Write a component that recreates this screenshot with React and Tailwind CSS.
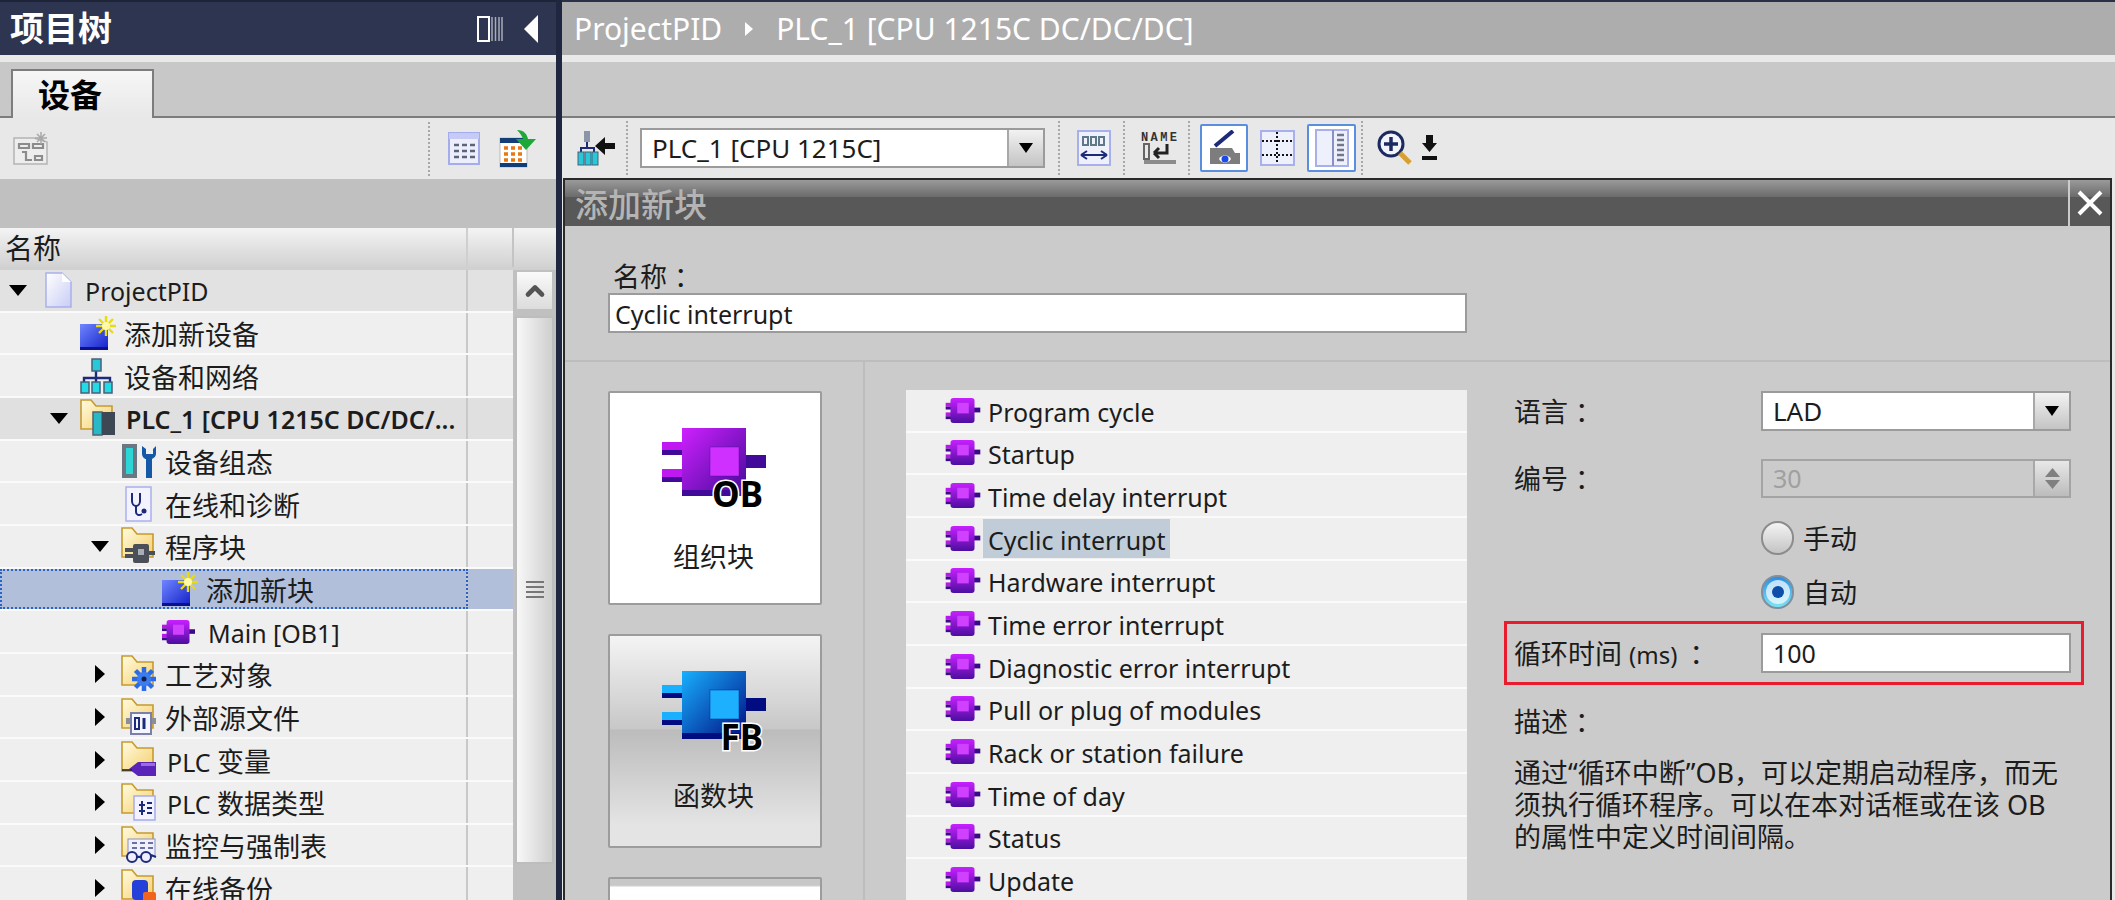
import { ChevronUp } from "lucide-react";

const FONT = "[font-family:'Noto_Sans','Noto_Sans_CJK_SC',sans-serif]";

function Caret({ open }) {
  if (open) {
    return (
      <svg width="18" height="11" viewBox="0 0 18 11">
        <path d="M0 0h18L9 11z" fill="#000" />
      </svg>
    );
  }
  return (
    <svg width="10" height="18" viewBox="0 0 10 18">
      <path d="M0 0l10 9-10 9z" fill="#000" />
    </svg>
  );
}

function FileIcon() {
  return (
    <svg className="ml-[6px]" width="27" height="36" viewBox="0 0 27 36">
      <defs>
        <linearGradient id="file" x1="0" y1="0" x2="1" y2="1">
          <stop offset="0" stopColor="#ffffff" />
          <stop offset="1" stopColor="#c8cdf5" />
        </linearGradient>
      </defs>
      <path d="M1 1h16l9 9v25H1z" fill="url(#file)" stroke="#a9b0ea" strokeWidth="1.5" />
      <path d="M17 1v9h9z" fill="#ffffff" />
    </svg>
  );
}

function NewIcon({ size = 36 }) {
  return (
    <svg width={size} height={size} viewBox="0 0 36 36">
      <defs>
        <linearGradient id="newblue" x1="0" y1="0" x2="1" y2="1">
          <stop offset="0" stopColor="#6f86ff" />
          <stop offset="1" stopColor="#1420c8" />
        </linearGradient>
      </defs>
      <rect x="0" y="9" width="28" height="26" fill="url(#newblue)" />
      <rect x="0" y="32" width="28" height="3" fill="#0a1090" />
      <path d="M26 1v20M16 11h20M19 4l14 14M33 4L19 18" stroke="#e8dc10" strokeWidth="2.4" />
      <circle cx="26" cy="11" r="4" fill="#fff9a8" />
    </svg>
  );
}

function NetworkIcon() {
  return (
    <svg width="34" height="36" viewBox="0 0 34 36">
      <path d="M16 12v8M4 24v-4h26v4M16 20v4" stroke="#1c2a78" strokeWidth="2.4" fill="none" />
      <rect x="12" y="1" width="9" height="12" fill="#28c8d8" stroke="#47607a" strokeWidth="1.5" />
      <rect x="1" y="24" width="8" height="11" fill="#22dbe4" stroke="#47607a" strokeWidth="1.5" />
      <rect x="12" y="24" width="8" height="11" fill="#22dbe4" stroke="#47607a" strokeWidth="1.5" />
      <rect x="24" y="24" width="8" height="11" fill="#22dbe4" stroke="#47607a" strokeWidth="1.5" />
    </svg>
  );
}

function ConfigIcon() {
  return (
    <svg width="36" height="36" viewBox="0 0 36 36">
      <rect x="1" y="1" width="15" height="34" fill="#6a7682" />
      <rect x="5" y="5" width="7" height="26" fill="#2cd6d6" />
      <path d="M21 3v8c0 3 3 5 4 5v19h6V16c2-1 4-3 4-5V3l-3 3v5h-7V6z" fill="#1458a8" />
    </svg>
  );
}

function DiagIcon() {
  return (
    <svg className="ml-[4px]" width="27" height="36" viewBox="0 0 27 36">
      <rect x="1" y="1" width="25" height="34" fill="#f2f3ff" stroke="#aab0ec" strokeWidth="1.5" />
      <path d="M7 7v8c0 3 2 5 4 5s4-2 4-5V7M11 20v6c0 3 3 4 6 2" fill="none" stroke="#1c2a78" strokeWidth="2" />
      <circle cx="19" cy="25" r="2.5" fill="#1c2a78" />
    </svg>
  );
}

function BlockIcon({ w = 36, h = 25 }) {
  return (
    <svg width={w} height={h} viewBox="0 0 36 26">
      <defs>
        <linearGradient id="blk" x1="0" y1="0" x2="0" y2="1">
          <stop offset="0" stopColor="#c820ff" />
          <stop offset="1" stopColor="#4c0ea0" />
        </linearGradient>
      </defs>
      <rect x="0" y="5" width="7" height="4" fill="#b818e8" />
      <rect x="0" y="9" width="7" height="3" fill="#3c0a88" />
      <rect x="0" y="15" width="7" height="4" fill="#b818e8" />
      <rect x="0" y="19" width="7" height="3" fill="#3c0a88" />
      <rect x="29" y="10" width="7" height="5" fill="#3c0a88" />
      <rect x="5" y="0" width="25" height="26" rx="3" fill="url(#blk)" />
      <rect x="12" y="5" width="12" height="11" fill="#d040ff" />
    </svg>
  );
}

function FolderIcon({ kind }) {
  return (
    <svg width="36" height="38" viewBox="0 0 36 38">
      <defs>
        <linearGradient id="fold" x1="0" y1="0" x2="1" y2="1">
          <stop offset="0" stopColor="#fffbe0" />
          <stop offset="1" stopColor="#f5cf6c" />
        </linearGradient>
      </defs>
      <path d="M1 1h10l5 6h16v23H1z" fill="url(#fold)" stroke="#c69a2e" strokeWidth="1.6" />
      {kind === "plc" && (
        <>
          <rect x="13" y="13" width="9" height="23" fill="#28b8c8" stroke="#54606c" strokeWidth="1.5" />
          <rect x="22" y="13" width="13" height="23" fill="#3d4854" />
        </>
      )}
      {kind === "block" && (
        <>
          <rect x="4" y="21" width="8" height="4" fill="#4a4f58" />
          <rect x="4" y="27" width="8" height="4" fill="#4a4f58" />
          <rect x="12" y="17" width="16" height="19" rx="2" fill="#4a4f58" />
          <rect x="17" y="22" width="6" height="6" fill="#a8aeb8" />
          <rect x="28" y="24" width="6" height="4" fill="#4a4f58" />
        </>
      )}
      {kind === "gear" && (
        <>
          <path d="M23 12v24M11 24h24M14.5 15.5l17 17M31.5 15.5l-17 17" stroke="#2a6ce8" strokeWidth="4.5" />
          <circle cx="23" cy="24" r="7" fill="#3b7cf0" />
          <circle cx="23" cy="24" r="2.5" fill="#10204a" />
        </>
      )}
      {kind === "source" && (
        <>
          <rect x="5" y="20" width="30" height="6" fill="#8a8f98" />
          <rect x="10" y="15" width="20" height="21" fill="#f4f5ff" stroke="#7b80a8" strokeWidth="2" />
          <rect x="14" y="20" width="4" height="11" fill="none" stroke="#1c2a78" strokeWidth="2" />
          <path d="M23 20v11" stroke="#1c2a78" strokeWidth="3" />
        </>
      )}
      {kind === "tag" && (
        <>
          <path d="M8 28l9-7h18v14H17z" fill="#5a24b8" />
          <path d="M1 29h10" stroke="#222" strokeWidth="1.6" />
          <rect x="20" y="22" width="14" height="3" fill="#9a6ce0" />
        </>
      )}
      {kind === "type" && (
        <>
          <rect x="13" y="13" width="21" height="24" fill="#f2f3ff" stroke="#a6acec" strokeWidth="1.5" />
          <path d="M21 18v14M26 20h5M26 25h5M26 30h5M18 22h6M18 28h6" stroke="#1c2a78" strokeWidth="2" />
        </>
      )}
      {kind === "watch" && (
        <>
          <rect x="7" y="13" width="27" height="17" fill="#eef0ff" stroke="#8a90c8" />
          <path d="M11 17h5M19 17h5M27 17h5M11 22h5M19 22h5M27 22h5" stroke="#6a70a0" strokeWidth="2" />
          <circle cx="11" cy="31" r="5" fill="#eef" stroke="#1c2a78" strokeWidth="2" />
          <circle cx="25" cy="31" r="5" fill="#eef" stroke="#1c2a78" strokeWidth="2" />
          <path d="M16 31h4M30 29l5 2" stroke="#1c2a78" strokeWidth="2" />
        </>
      )}
      {kind === "backup" && (
        <>
          <rect x="11" y="11" width="16" height="20" rx="4" fill="#2440d8" />
          <rect x="22" y="23" width="13" height="13" rx="2" fill="#f0641c" />
        </>
      )}
    </svg>
  );
}

const TREE_ROWS = [
  { level: 0, caret: "open", icon: <FileIcon />, label: "ProjectPID", tone: "bg-[#e2e2e2]" },
  { level: 1, icon: <NewIcon />, label: "添加新设备" },
  { level: 1, icon: <NetworkIcon />, label: "设备和网络" },
  { level: 1, caret: "open", icon: <FolderIcon kind="plc" />, label: "PLC_1 [CPU 1215C DC/DC/...", tone: "bg-[#e0e0e0]", bold: true },
  { level: 2, icon: <ConfigIcon />, label: "设备组态" },
  { level: 2, icon: <DiagIcon />, label: "在线和诊断" },
  { level: 2, caret: "open", icon: <FolderIcon kind="block" />, label: "程序块" },
  { level: 3, icon: <NewIcon />, label: "添加新块", selected: true },
  { level: 3, icon: <BlockIcon w={33} h={24} />, label: "Main [OB1]" },
  { level: 2, caret: "closed", icon: <FolderIcon kind="gear" />, label: "工艺对象" },
  { level: 2, caret: "closed", icon: <FolderIcon kind="source" />, label: "外部源文件" },
  { level: 2, caret: "closed", icon: <FolderIcon kind="tag" />, label: "PLC 变量" },
  { level: 2, caret: "closed", icon: <FolderIcon kind="type" />, label: "PLC 数据类型" },
  { level: 2, caret: "closed", icon: <FolderIcon kind="watch" />, label: "监控与强制表" },
  { level: 2, caret: "closed", icon: <FolderIcon kind="backup" />, label: "在线备份" },
];

const LEVEL_PAD = ["pl-0", "pl-[41px]", "pl-[82px]", "pl-[123px]"];

const OB_TYPES = [
  "Program cycle",
  "Startup",
  "Time delay interrupt",
  "Cyclic interrupt",
  "Hardware interrupt",
  "Time error interrupt",
  "Diagnostic error interrupt",
  "Pull or plug of modules",
  "Rack or station failure",
  "Time of day",
  "Status",
  "Update",
];

// latin runs are a bit smaller than the chinese ones in the portal font
function MixedText({ text }) {
  return text.split(/([\u4e00-\u9fff]+)/).map((part, i) =>
    /[\u4e00-\u9fff]/.test(part) ? (
      <span key={i} className="text-[27px]">
        {part}
      </span>
    ) : (
      <span key={i}>{part}</span>
    )
  );
}

function TreeRow({ row }) {
  const bg = row.selected ? "bg-[#b1bfdb]" : row.tone || "bg-[#efefef]";
  const iconWidth = /^[A-Za-z]/.test(row.label) ? "w-[46px]" : "w-[44px]";
  return (
    <div className={`flex h-[42.67px] w-[513px] shrink-0 border-b-2 border-[#fafafa] ${bg}`}>
      <div
        className={`flex h-full w-[468px] items-center border-r-2 border-[#c8c8c8] ${LEVEL_PAD[row.level]} ${
          row.selected ? "outline-2 -outline-offset-2 outline-dotted outline-[#2a62c8]" : ""
        }`}
      >
        <div className="flex w-[39px] shrink-0 justify-center pr-[6px] pl-[3px]">
          {row.caret && <Caret open={row.caret === "open"} />}
        </div>
        <div className={`flex shrink-0 items-center justify-start ${iconWidth}`}>{row.icon}</div>
        <span className={`pt-[3px] text-[25px] leading-none whitespace-nowrap text-[#1c1c1c] ${row.bold ? "font-semibold" : ""}`}>
          <MixedText text={row.label} />
        </span>
      </div>
    </div>
  );
}

function TreeScrollbar() {
  return (
    <div className="flex w-[39px] flex-col">
      <div className="flex h-[41px] items-center justify-center border-2 border-[#c0c0c0] bg-gradient-to-b from-[#fafafa] to-[#dcdcdc]">
        <ChevronUp size={28} strokeWidth={4} className="text-[#555]" />
      </div>
      <div className="mt-[5px] flex h-[548px] items-center justify-center border-2 border-[#bdbdbd] bg-gradient-to-r from-[#f8f8f8] to-[#cfcfcf]">
        <div className="mt-[-2px] flex w-[18px] flex-col gap-[3px]">
          <div className="h-[2px] bg-[#777]" />
          <div className="h-[2px] bg-[#777]" />
          <div className="h-[2px] bg-[#777]" />
          <div className="h-[2px] bg-[#777]" />
        </div>
      </div>
    </div>
  );
}

function ProjectTree() {
  return (
    <div className="flex h-full w-[556px] shrink-0 flex-col overflow-hidden bg-[#c0c0c0]">
      <div className="flex h-[55px] shrink-0 items-center border-t-2 border-[#1e2438] bg-[#2d3550] pr-[18px] pl-[10px] text-white">
        <span className="text-[34px] font-semibold">项目树</span>
        <svg className="mr-[21px] ml-auto" width="26" height="26" viewBox="0 0 26 26">
          <rect x="1" y="1" width="11" height="24" fill="none" stroke="#fff" strokeWidth="2" />
          <path d="M15 1v24M18.500 1v24M22 1v24M25 1v24" stroke="#a8acb8" strokeWidth="1.500" />
        </svg>
        <svg width="14" height="28" viewBox="0 0 14 28">
          <path d="M14 0v28L0 14z" fill="#fff" />
        </svg>
      </div>
      <div className="h-[7px] shrink-0 bg-[#e9e9e9]" />
      <div className="flex h-[56px] shrink-0 items-end border-b-2 border-[#7d7d7d] bg-[#c8c8c8] pl-[11px]">
        <div className="mb-[-2px] flex h-[49px] w-[143px] items-center border-2 border-b-0 border-[#7d7d7d] bg-gradient-to-b from-[#f6f6f6] to-[#e8e8e8] pl-[25px] text-[32px] font-bold text-black">
          设备
        </div>
      </div>
      <div className="flex h-[61px] shrink-0 items-center bg-[#e8e8e8] pl-[13px]">
        <svg width="36" height="34" viewBox="0 0 36 34">
          <path d="M1 6h20l13 4v22H1z" fill="#ededed" stroke="#b4b4b4" strokeWidth="1.500" />
          <path d="M6 12h10v4H6zM20 12h10v4H20zM9 20h4v8h6M22 24h7v4h-7z" fill="none" stroke="#8c8c8c" strokeWidth="2.200" />
          <path d="M28 0v12M22 6h12M24 2l8 8M32 2l-8 8" stroke="#a8a8a8" strokeWidth="1.500" />
        </svg>
        <div className="ml-[379px] h-[54px] border-l-2 border-dotted border-[#a8a8a8]" />
        <svg className="ml-[18px]" width="33" height="34" viewBox="0 0 33 34">
          <rect x="1" y="1" width="30" height="31" fill="#eceefc" stroke="#a4acec" strokeWidth="2" />
          <rect x="1" y="1" width="30" height="6" fill="#c5cbf5" />
          <path d="M6 13h5M14 13h5M22 13h5M6 19h5M14 19h5M22 19h5M6 25h5M14 25h5M22 25h5" stroke="#5e6478" strokeWidth="2.500" />
        </svg>
        <svg className="ml-[18px]" width="38" height="38" viewBox="0 0 38 38">
          <rect x="1" y="8" width="27" height="29" fill="#fff" stroke="#bbb" />
          <rect x="1" y="8" width="27" height="5" fill="#123e78" />
          <rect x="1" y="33" width="27" height="4" fill="#123e78" />
          <path d="M5 18h4M12 18h4M19 18h4M5 24h4M12 24h4M19 24h4M5 30h4M12 30h4M19 30h4" stroke="#e87810" strokeWidth="3.500" />
          <path d="M18 0c7 0 10 4 11 9h8L27 20 17 9h7c-1-3-3-6-6-9z" fill="#1ea838" />
        </svg>
      </div>
      <div className="h-[49px] shrink-0 bg-[#c0c0c0]" />
      <div className="flex h-[42px] shrink-0 border-b-[3px] border-[#d0d0d0] bg-gradient-to-b from-[#f4f4f4] via-[#e2e2e2] to-[#d2d2d2]">
        <div className="flex w-[468px] items-center border-r-2 border-[#cfcfcf] pl-[5px] text-[28px] text-[#1c1c1c]">名称</div>
        <div className="w-[46px] border-r-2 border-[#c4c4c4]" />
      </div>
      <div className="flex min-h-0 flex-1">
        <div className="flex flex-col">
          {TREE_ROWS.map((row) => (
            <TreeRow key={row.label} row={row} />
          ))}
        </div>
        <div className="ml-[2px] h-full">
          <TreeScrollbar />
        </div>
      </div>
    </div>
  );
}

function Dots() {
  return <div className="h-[54px] shrink-0 border-l-2 border-dotted border-[#a8a8a8]" />;
}

function DropArrow() {
  return (
    <svg width="14" height="10" viewBox="0 0 14 10">
      <path d="M0 0h14L7 10z" fill="#000" />
    </svg>
  );
}

function SelectBox({ value, className }) {
  return (
    <div className={`flex border-2 border-[#9b9b9b] bg-white ${className}`}>
      <span className="flex flex-1 items-center pl-[10px] text-[26px] leading-none text-[#1c1c1c]">{value}</span>
      <div className="flex w-[36px] items-center justify-center border-l-2 border-[#a8a8a8] bg-gradient-to-b from-[#f2f2f2] to-[#c4c4c4]">
        <DropArrow />
      </div>
    </div>
  );
}

function EditorToolbar() {
  return (
    <div className="flex h-[60px] shrink-0 items-center bg-[#e8e8e8] pl-[15px]">
      <svg width="38" height="36" viewBox="0 0 38 36">
        <path d="M10 12v6M4 22v-4h13v4" stroke="#1c2a78" strokeWidth="2" fill="none" />
        <rect x="7" y="1" width="6" height="11" fill="#8a96a8" />
        <rect x="1" y="22" width="6" height="13" fill="#28c8d8" stroke="#47607a" />
        <rect x="8" y="22" width="6" height="13" fill="#28c8d8" stroke="#47607a" />
        <rect x="15" y="22" width="6" height="13" fill="#28c8d8" stroke="#47607a" />
        <path d="M38 13v6H28v6l-10-9 10-9v6z" fill="#111" />
      </svg>
      <div className="ml-[11px]">
        <Dots />
      </div>
      <SelectBox value="PLC_1 [CPU 1215C]" className="ml-[12px] h-[40px] w-[405px]" />
      <div className="ml-[13px]">
        <Dots />
      </div>
      <svg className="ml-[17px]" width="34" height="36" viewBox="0 0 34 36">
        <rect x="1" y="1" width="32" height="34" fill="#eef0fc" stroke="#a8b0ec" strokeWidth="2" />
        <path d="M6 7h5v8H6zM14 7h5v8h-5zM22 7h5v8h-5z" fill="none" stroke="#5e7888" strokeWidth="2" />
        <path d="M4 25h26M4 25l6-4M4 25l6 4M30 25l-6-4M30 25l-6 4" stroke="#1c2a78" strokeWidth="2" fill="none" />
      </svg>
      <div className="ml-[12px]">
        <Dots />
      </div>
      <svg className="ml-[16px]" width="36" height="36" viewBox="0 0 36 36">
        <text x="0" y="11" fontSize="12" fontWeight="800" fontFamily="'Liberation Mono',monospace" fill="#333" textLength="36">NAME</text>
        <rect x="3" y="14" width="5" height="15" fill="none" stroke="#666" strokeWidth="2" />
        <path d="M26 14v9H13M13 23l5-5M13 23l5 5" stroke="#222" strokeWidth="3" fill="none" />
        <rect x="3" y="30" width="32" height="4" fill="#8c8c8c" />
      </svg>
      <div className="ml-[11px]">
        <Dots />
      </div>
      <div className="ml-[10px] flex h-[48px] w-[48px] items-center justify-center rounded-[2px] border-2 border-[#5a8fe0] bg-white">
        <svg width="34" height="36" viewBox="0 0 34 36">
          <path d="M8 16L26 1" stroke="#1c2a78" strokeWidth="4" />
          <path d="M3 18h22l3 5H33v11H3z" fill="#7d7d7d" />
          <path d="M12 29c3-5 9-5 12 0-3 5-9 5-12 0z" fill="#fff" />
          <circle cx="18" cy="29" r="3.500" fill="#1c4ae8" />
        </svg>
      </div>
      <svg className="ml-[12px]" width="35" height="36" viewBox="0 0 35 36">
        <rect x="1" y="1" width="33" height="34" fill="#eef0fc" stroke="#a8b0ec" strokeWidth="2" />
        <path d="M17 2v32" stroke="#111" strokeWidth="2" strokeDasharray="2 2" />
        <path d="M2 11h31M2 25h31" stroke="#111" strokeWidth="2" strokeDasharray="2 2" />
      </svg>
      <div className="ml-[12px] flex h-[48px] w-[49px] items-center justify-center rounded-[2px] border-2 border-[#5a8fe0] bg-white">
        <svg width="34" height="38" viewBox="0 0 34 38">
          <rect x="1" y="1" width="32" height="36" fill="#eef0fc" stroke="#a8b0ec" strokeWidth="2" />
          <path d="M18 1v36" stroke="#8890c8" strokeWidth="2" />
          <path d="M22 6h7M22 11h7M22 16h7M22 21h7M22 26h7M22 31h7" stroke="#707890" strokeWidth="2.500" />
        </svg>
      </div>
      <div className="ml-[5px]">
        <Dots />
      </div>
      <svg className="ml-[14px]" width="35" height="36" viewBox="0 0 35 36">
        <circle cx="14" cy="14" r="12" fill="#f2f4fc" stroke="#1c2a60" strokeWidth="3" />
        <path d="M14 7v14M7 14h14" stroke="#1c2a60" strokeWidth="3.500" />
        <path d="M23 23l10 10" stroke="#d8a030" strokeWidth="5" />
      </svg>
      <svg className="ml-[10px]" width="15" height="26" viewBox="0 0 15 26">
        <path d="M4 0h7v8h4l-7.500 9L0 8h4z" fill="#111" />
        <rect x="0" y="21" width="15" height="4" fill="#111" />
      </svg>
    </div>
  );
}

function BigBlock({ body, dark, light, inner, tag }) {
  const id = `big-${tag}`;
  return (
    <svg width="106" height="82" viewBox="0 0 106 82">
      <defs>
        <linearGradient id={id} x1="0" y1="0" x2="1" y2="1">
          <stop offset="0" stopColor={body} />
          <stop offset="1" stopColor={dark} />
        </linearGradient>
      </defs>
      <rect x="0" y="14" width="21" height="13" fill={light} />
      <rect x="0" y="22" width="21" height="5" fill={dark} />
      <rect x="0" y="41" width="21" height="13" fill={light} />
      <rect x="0" y="49" width="21" height="5" fill={dark} />
      <rect x="84" y="27" width="20" height="13" fill={dark} />
      <rect x="20" y="0" width="64" height="68" fill={`url(#${id})`} />
      <rect x="20" y="62" width="64" height="6" fill={dark} />
      <rect x="48" y="19" width="29" height="29" fill={inner} stroke={dark} strokeOpacity="0.400" />
      <text
        x="101"
        y="79"
        textAnchor="end"
        fontSize="35"
        fontWeight="700"
        fontFamily="'Noto Sans',sans-serif"
        fill="#000"
        stroke="#fff"
        strokeWidth="3"
        paintOrder="stroke"
      >
        {tag}
      </text>
    </svg>
  );
}

function TypeButton({ className, icon, label, labelGap }) {
  return (
    <div className={`flex h-[214px] w-[214px] shrink-0 flex-col items-center rounded-[2px] border-2 border-[#9c9c9c] pt-[35px] ${className}`}>
      {icon}
      <span className={`pr-[3px] text-[27px] leading-none text-[#1c1c1c] ${labelGap}`}>{label}</span>
    </div>
  );
}

function TypeColumn() {
  return (
    <div className="flex w-[300px] shrink-0 flex-col gap-[29px] border-r-2 border-[#bdbdbd] pt-[29px] pl-[43px]">
      <TypeButton
        className="bg-white"
        labelGap="mt-[33px]"
        label="组织块"
        icon={<BigBlock body="#cf20ff" dark="#420a98" light="#c018f0" inner="#d030ff" tag="OB" />}
      />
      <TypeButton
        className="bg-[linear-gradient(#f4f4f4_0%,#c8c8c8_44%,#bcbcbc_45%,#e4e4e4_90%)]"
        labelGap="mt-[29px]"
        label="函数块"
        icon={<BigBlock body="#18b0ff" dark="#000c80" light="#18b0ff" inner="#1cb0ff" tag="FB" />}
      />
      <div className="h-[214px] w-[214px] shrink-0 rounded-[2px] border-2 border-[#9c9c9c] bg-[linear-gradient(#c8c8c8_0%,#c8c8c8_3%,#ffffff_4%,#f0f0f0_100%)]" />
    </div>
  );
}

function ObList() {
  return (
    <div className="mt-[28px] ml-[41px] flex w-[561px] shrink-0 flex-col self-stretch bg-[#efefef]">
      {OB_TYPES.map((name) => (
        <div key={name} className="flex h-[42.67px] shrink-0 items-center border-b-2 border-[#fafafa] pl-[39px]">
          <BlockIcon />
          <span
            className={`ml-[2px] flex h-[39px] items-center px-[5px] pt-[4px] text-[25px] leading-none text-[#1c1c1c] ${
              name === "Cyclic interrupt" ? "bg-[#c0ccd8]" : ""
            }`}
          >
            {name}
          </span>
        </div>
      ))}
    </div>
  );
}

function Radio({ checked, label, className }) {
  return (
    <div className={`flex h-[34px] items-center ${className}`}>
      {checked ? (
        <div className="flex h-[34px] w-[33px] items-center justify-center rounded-full border-2 border-[#7f8f9f] bg-gradient-to-b from-[#2c8ee0] to-[#7ce4f4]">
          <div className="flex h-[24px] w-[24px] items-center justify-center rounded-full bg-white/70">
            <div className="h-[12px] w-[12px] rounded-full bg-[#0c4ea8]" />
          </div>
        </div>
      ) : (
        <div className="h-[34px] w-[33px] rounded-full border-2 border-[#8c8c8c] bg-gradient-to-b from-[#f4f4f4] to-[#c4c4c4]" />
      )}
      <span className="ml-[9px] text-[27px] leading-none text-[#1c1c1c]">{label}</span>
    </div>
  );
}

function FormRow({ label, children, className }) {
  return (
    <div className={`flex items-center ${className}`}>
      <span className="w-[247px] shrink-0 text-[27px] leading-none whitespace-nowrap text-[#1c1c1c]">{label}</span>
      {children}
    </div>
  );
}

function OptionsPane() {
  return (
    <div className="flex flex-1 flex-col pt-[29px] pl-[47px]">
      <FormRow label="语言 ：">
        <SelectBox value="LAD" className="h-[40px] w-[310px]" />
      </FormRow>
      <FormRow label="编号 ：" className="mt-[28px]">
        <div className="flex h-[39px] w-[310px] border-2 border-[#a4a4a4] bg-[#cbcbcb]">
          <span className="flex flex-1 items-center pl-[10px] text-[25px] leading-none text-[#a0a0a0]">30</span>
          <div className="flex w-[36px] flex-col items-center justify-center gap-[3px] border-l-2 border-[#a8a8a8] bg-gradient-to-b from-[#e8e8e8] to-[#bcbcbc]">
            <svg width="15" height="9" viewBox="0 0 15 9">
              <path d="M0 9h15L7.500 0z" fill="#808080" />
            </svg>
            <svg width="15" height="9" viewBox="0 0 15 9">
              <path d="M0 0h15L7.500 9z" fill="#808080" />
            </svg>
          </div>
        </div>
      </FormRow>
      <Radio label="手动" className="mt-[23px] ml-[247px]" />
      <Radio checked label="自动" className="mt-[20px] ml-[247px]" />
      <div className="mt-[12px] -ml-[10px] flex h-[64px] w-[580px] items-center border-[3px] border-[#e81c2e] pl-[7px]">
        <span className="w-[247px] shrink-0 text-[27px] leading-none whitespace-nowrap text-[#1c1c1c]">
          循环时间 <span className="text-[24px]">(ms)</span> <span className="ml-[5px]">：</span>
        </span>
        <div className="flex h-[40px] w-[310px] items-center border-2 border-[#9b9b9b] bg-white pl-[10px] text-[25px] leading-none text-[#1c1c1c]">
          100
        </div>
      </div>
      <span className="mt-[21px] text-[27px] leading-[32px] text-[#1c1c1c]">描述 ：</span>
      <div className="mt-[19px] text-[27px] leading-[32px] whitespace-nowrap text-[#1c1c1c]">
        <div>通过“循环中断”OB，可以定期启动程序，而无</div>
        <div>须执行循环程序。可以在本对话框或在该 OB</div>
        <div>的属性中定义时间间隔。</div>
      </div>
    </div>
  );
}

function AddBlockDialog() {
  return (
    <div className="mr-[3px] ml-[1px] flex min-h-0 flex-1 flex-col overflow-hidden border-x-2 border-t-2 border-[#2a2a2a] bg-[#cbcbcb]">
      <div className="flex h-[46px] shrink-0 bg-[linear-gradient(#9a9a9a_0%,#6c6c6c_36%,#585858_37%,#585858_100%)]">
        <span className="mt-[3px] ml-[10px] text-[33px] leading-[44px] font-medium text-[#b4b4b4]">添加新块</span>
        <div className="ml-auto flex w-[42px] items-center justify-center border-l-2 border-[#cbcbcb]">
          <svg width="26" height="26" viewBox="0 0 26 26">
            <path d="M2 2l22 22M24 2L2 24" stroke="#fff" strokeWidth="4" />
          </svg>
        </div>
      </div>
      <div className="flex h-[136px] shrink-0 flex-col border-b-2 border-[#bdbdbd] pl-[43px]">
        <span className="mt-[35px] pl-[5px] text-[27px] leading-[32px] text-[#1c1c1c]">名称 ：</span>
        <div className="flex h-[40px] w-[859px] items-center border-2 border-[#9b9b9b] bg-white pt-[2px] pl-[5px] text-[25px] leading-none text-[#1c1c1c]">
          Cyclic interrupt
        </div>
      </div>
      <div className="flex min-h-0 flex-1 overflow-hidden">
        <TypeColumn />
        <ObList />
        <OptionsPane />
      </div>
    </div>
  );
}

export default function App() {
  return (
    <div className={`flex h-[900px] w-[2115px] overflow-hidden bg-white ${FONT}`}>
      <ProjectTree />
      <div className="h-full w-[6px] shrink-0 bg-[#1f2740]" />
      <div className="flex h-full min-w-0 flex-1 flex-col bg-[#e8e8e8]">
        <div className="flex h-[55px] shrink-0 items-center gap-[23px] border-t-2 border-[#2a3045] bg-[#adadad] pl-[12px] text-[30px] text-white">
          <span>ProjectPID</span>
          <svg width="8" height="14" viewBox="0 0 8 14">
            <path d="M0 0l8 7-8 7z" fill="#fff" />
          </svg>
          <span>PLC_1 [CPU 1215C DC/DC/DC]</span>
        </div>
        <div className="h-[7px] shrink-0 bg-[#e9e9e9]" />
        <div className="h-[56px] shrink-0 border-b-2 border-[#7d7d7d] bg-[#c8c8c8]" />
        <EditorToolbar />
        <AddBlockDialog />
      </div>
    </div>
  );
}
